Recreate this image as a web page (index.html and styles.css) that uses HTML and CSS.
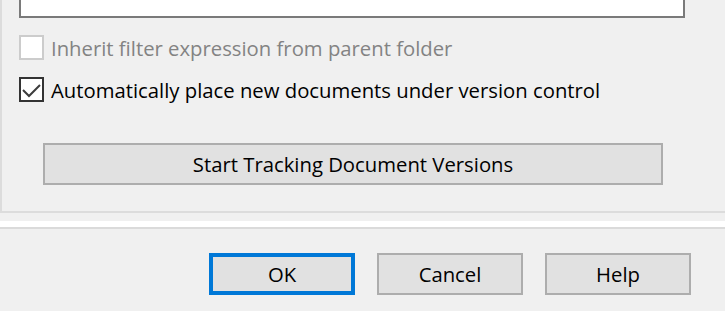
FILE: index.html
```html
<!DOCTYPE html>
<html>
<head>
<meta charset="utf-8">
<link rel="stylesheet" href="styles.css">
</head>
<body>
<div class="group">
  <div class="textbox"></div>
  <label class="check disabled">
    <span class="box"></span>
    <span class="label">Inherit filter expression from parent folder</span>
  </label>
  <label class="check">
    <span class="box checked">
      <svg width="21" height="21" viewBox="0 0 21 21"><polyline points="2,11 8,17 19,6" fill="none" stroke="#3c3c3c" stroke-width="2"/></svg>
    </span>
    <span class="label">Automatically place new documents under version control</span>
  </label>
  <div class="wide-row">
    <button class="btn wide">Start Tracking Document Versions</button>
  </div>
</div>
<div class="gap"></div>
<div class="separator"></div>
<div class="footer">
  <button class="btn default">OK</button>
  <button class="btn">Cancel</button>
  <button class="btn">Help</button>
</div>
</body>
</html>
```
FILE: styles.css
```css
html, body {
  margin: 0;
  padding: 0;
}
body {
  width: 725px;
  height: 311px;
  overflow: hidden;
  background: #f0f0f0;
  font-family: "Open Sans", sans-serif;
  font-size: 20.3px;
  color: #000;
}
.group {
  box-sizing: border-box;
  height: 213px;
  border-left: 2px solid #dcdcdc;
  border-bottom: 2px solid #dcdcdc;
  padding-left: 17px;
  display: flex;
  flex-direction: column;
}
.textbox {
  box-sizing: border-box;
  width: 666px;
  height: 18px;
  background: #fff;
  border: 2px solid #7a7a7a;
  border-top: none;
}
.check {
  display: flex;
  align-items: center;
  height: 25px;
  gap: 7px;
  white-space: nowrap;
}
.check:first-of-type {
  margin-top: 17px;
}
.check + .check {
  margin-top: 17px;
}
.label {
  line-height: 25px;
  position: relative;
  top: 1px;
}
.box {
  box-sizing: border-box;
  width: 25px;
  height: 25px;
  flex: none;
  border: 2px solid #333;
  background: #fff;
  display: flex;
}
.disabled .box {
  border-color: #cccccc;
}
.disabled .label {
  color: #838383;
}
.wide-row {
  margin-top: 41px;
  padding-left: 24px;
}
.btn {
  box-sizing: border-box;
  height: 42px;
  width: 146px;
  background: #e1e1e1;
  border: 2px solid #adadad;
  font: inherit;
  color: #000;
  padding: 0;
  margin: 0;
}
.btn.wide {
  width: 620px;
}
.btn.default {
  border: 4px solid #0078d7;
}
.gap {
  height: 8px;
}
.separator {
  height: 6px;
  background: #fff;
  border-bottom: 2px solid #dadada;
}
.footer {
  display: flex;
  justify-content: flex-end;
  gap: 22px;
  padding-right: 34px;
  margin-top: 24px;
}
```
